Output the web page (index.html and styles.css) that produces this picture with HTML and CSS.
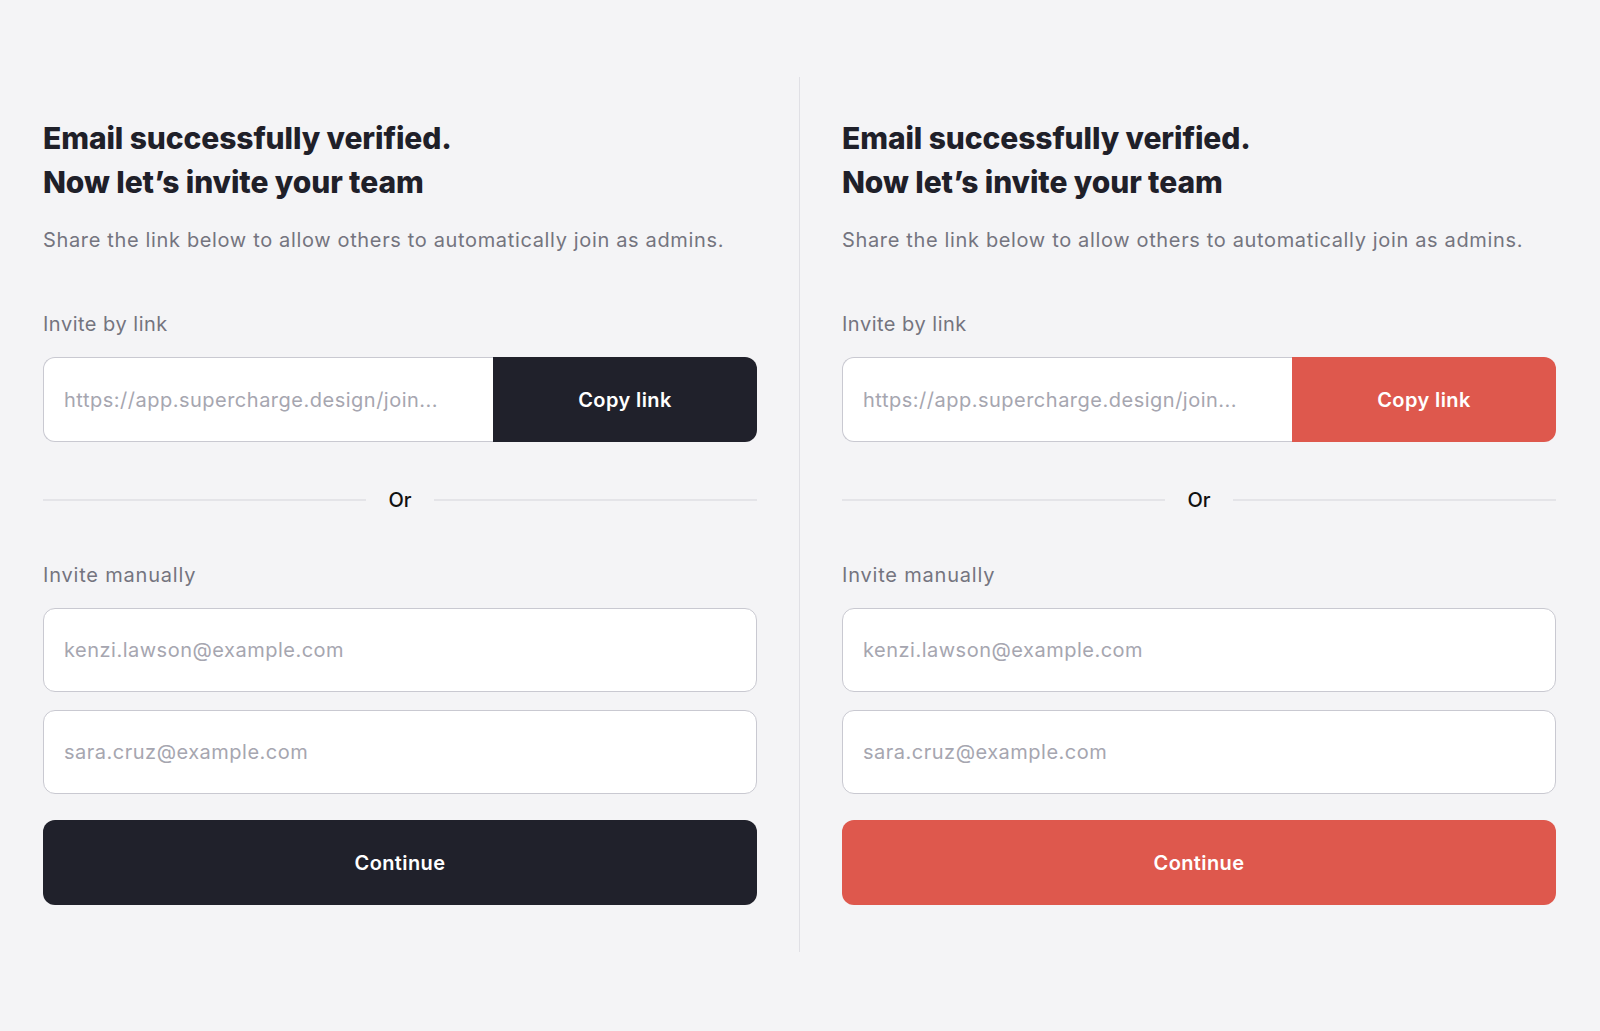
FILE: index.html
```html
<!DOCTYPE html>
<html lang="en">
<head>
<meta charset="utf-8">
<title>Invite your team</title>
<link rel="stylesheet" href="styles.css">
</head>
<body>
<main class="page">
  <section class="panel">
    <h1 class="title">Email successfully verified.<br>Now let’s invite your team</h1>
    <p class="subtitle">Share the link below to allow others to automatically join as admins.</p>
    <div class="label label-link">Invite by link</div>
    <div class="link-row">
      <div class="link-field">https://app.supercharge.design/join...</div>
      <button class="btn-copy dark">Copy link</button>
    </div>
    <div class="or-row"><span class="rule"></span><span class="or">Or</span><span class="rule"></span></div>
    <div class="label label-manual">Invite manually</div>
    <div class="field">kenzi.lawson@example.com</div>
    <div class="field field-second">sara.cruz@example.com</div>
    <button class="btn-continue dark">Continue</button>
  </section>
  <div class="divider"></div>
  <section class="panel">
    <h1 class="title">Email successfully verified.<br>Now let’s invite your team</h1>
    <p class="subtitle">Share the link below to allow others to automatically join as admins.</p>
    <div class="label label-link">Invite by link</div>
    <div class="link-row">
      <div class="link-field">https://app.supercharge.design/join...</div>
      <button class="btn-copy red">Copy link</button>
    </div>
    <div class="or-row"><span class="rule"></span><span class="or">Or</span><span class="rule"></span></div>
    <div class="label label-manual">Invite manually</div>
    <div class="field">kenzi.lawson@example.com</div>
    <div class="field field-second">sara.cruz@example.com</div>
    <button class="btn-continue red">Continue</button>
  </section>
</main>
</body>
</html>
```

FILE: styles.css
```css
* { box-sizing: border-box; }
html, body { margin: 0; padding: 0; }
body {
  background: #f4f4f6;
  font-family: "Inter", "Liberation Sans", sans-serif;
  color: #20212b;
  width: 1600px;
  height: 1031px;
  overflow: hidden;
}
.page {
  display: flex;
  padding: 77px 43px 0 43px;
  gap: 42px;
}
.panel {
  width: 714px;
  display: flex;
  flex-direction: column;
  padding-top: 39px;
}
.divider {
  width: 1px;
  height: 875px;
  background: #e0e0e5;
  flex: none;
}
.title {
  margin: 0;
  font-size: 30px;
  line-height: 44px;
  font-weight: 800;
  letter-spacing: -0.1px;
  color: #1f2029;
}
.subtitle {
  margin: 22px 0 0;
  font-size: 20px;
  line-height: 28px;
  color: #74747f;
  letter-spacing: 0.65px;
}
.label {
  font-size: 20px;
  line-height: 28px;
  color: #74747f;
  letter-spacing: 0.5px;
}
.label-link { margin-top: 56px; }
.label-manual { margin-top: 47px; letter-spacing: 0.8px; }
.link-row {
  margin-top: 19px;
  display: flex;
  height: 85px;
}
.link-field {
  flex: 1;
  background: #fff;
  border: 1px solid #c9c9d1;
  border-right: none;
  border-radius: 12px 0 0 12px;
  display: flex;
  align-items: center;
  padding-left: 20px;
  font-size: 20px;
  color: #a6a6b0;
  letter-spacing: 0.5px;
}
.btn-copy {
  width: 264px;
  border: none;
  border-radius: 0 12px 12px 0;
  color: #fff;
  font-family: inherit;
  font-size: 20px;
  font-weight: 600;
  letter-spacing: 0.4px;
}
.dark { background: #20212b; }
.red { background: #de584d; }
.or-row {
  margin-top: 44px;
  height: 28px;
  display: flex;
  align-items: center;
  gap: 14px;
}
.rule {
  flex: 1;
  height: 2px;
  background: #e4e4e8;
}
.or {
  width: 40px;
  text-align: center;
  font-size: 20px;
  color: #111;
  font-weight: 500;
}
.field {
  margin-top: 19px;
  height: 84px;
  background: #fff;
  border: 1px solid #c9c9d1;
  border-radius: 12px;
  display: flex;
  align-items: center;
  padding-left: 20px;
  font-size: 20px;
  color: #a6a6b0;
  letter-spacing: 0.5px;
}
.field-second { margin-top: 18px; }
.btn-continue {
  margin-top: 26px;
  height: 85px;
  border: none;
  border-radius: 12px;
  color: #fff;
  font-family: inherit;
  font-size: 20px;
  font-weight: 600;
  letter-spacing: 0.4px;
}
```
